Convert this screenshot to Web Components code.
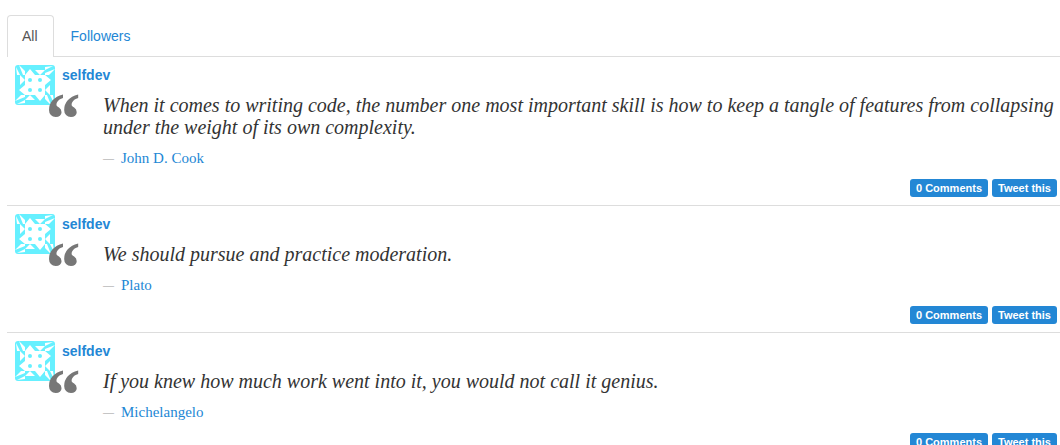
<!DOCTYPE html>
<html lang="en">
<head>
<meta charset="utf-8">
<title>Quotes</title>
<style>
  body { margin: 0; padding: 15px 0 0 7px; background: #fff; color: #333; font: 14px/20px "Liberation Sans", Arial, sans-serif; overflow-x: hidden; }
</style>
</head>
<body>
<quote-feed>
  <quote-tabs></quote-tabs>
  <quote-item user="selfdev" author="John D. Cook">When it comes to writing code, the number one most important skill is how to keep a tangle of features from collapsing under the weight of its own complexity.</quote-item>
  <quote-item user="selfdev" author="Plato">We should pursue and practice moderation.</quote-item>
  <quote-item user="selfdev" author="Michelangelo">If you knew how much work went into it, you would not call it genius.</quote-item>
</quote-feed>

<template id="feed"><style>:host { display: block; }</style><slot></slot></template>

<template id="tabs">
  <style>
    :host { display: block; }
    nav { display: flex; gap: 2px; border-bottom: 1px solid #ddd; }
    a { padding: 10px 15px 10px 14px; border: 1px solid transparent; border-bottom: 0; margin-bottom: -1px; color: #2387d5; text-decoration: none; border-radius: 4px 4px 0 0; }
    a[aria-current] { color: #555; border-color: #ddd; background: #fff; padding-bottom: 11px; }
  </style>
  <nav><a href="#all" aria-current="page">All</a><a href="#followers">Followers</a></nav>
</template>

<template id="avatar">
  <style>:host { display: block; width: 40px; height: 40px; } svg { display: block; }</style>
  <svg width="40" height="40" viewBox="0 0 40 40" aria-hidden="true">
    <defs><g id="q">
      <path fill="#66f0ff" d="M3 0H30V10H0V3Q0 0 3 0z"/>
      <path fill="#fff" d="M1 2L5 10H2zM4 0L10 6V10H8z"/>
      <path fill="#fff" d="M10 10L15 4L20 10zM20 5H30L25 10z"/>
      <circle cx="15" cy="15" r="2" fill="#66f0ff"/>
    </g></defs>
    <use href="#q"/><use href="#q" transform="rotate(90 20 20)"/><use href="#q" transform="rotate(180 20 20)"/><use href="#q" transform="rotate(270 20 20)"/>
  </svg>
</template>

<template id="item">
  <style>
    :host { display: block; border-bottom: 1px solid #ddd; }
    article { display: grid; grid-template-columns: 40px minmax(0, 1fr); column-gap: 7px; padding: 8px 0 8px 8px; }
    a { color: #2387d5; text-decoration: none; }
    .user { font-weight: bold; }
    figure { position: relative; margin: 9px 0 0 41px; font-family: "Liberation Serif", Georgia, serif; }
    figure::before { content: "\201C"; position: absolute; left: -61px; top: -12px; color: #777; font: italic bold 74px/74px "Liberation Serif", serif; }
    blockquote { margin: 0; font-size: 20px; line-height: 22px; font-style: italic; }
    figcaption { display: flex; gap: 7px; margin-top: 10px; font-size: 15px; line-height: 20px; color: #999; }
    .dash { font-size: 11px; }
    footer { display: flex; justify-content: flex-end; gap: 4px; margin: 11px 3px 0 0; }
    button { border: 0; border-radius: 3px; padding: 0 6px; background: #2387d5; color: #fff; font: bold 11px/18px "Liberation Sans", Arial, sans-serif; }
  </style>
  <article>
    <user-avatar></user-avatar>
    <div>
      <a class="user" href="#user"></a>
      <figure><blockquote><slot></slot></blockquote><figcaption><span class="dash">—</span><a class="author" href="#author"></a></figcaption></figure>
      <footer><button type="button">0 Comments</button><button type="button">Tweet this</button></footer>
    </div>
  </article>
</template>

<script>
  class TemplateElement extends HTMLElement {
    constructor() {
      super();
      this.attachShadow({ mode: "open" }).append(document.getElementById(this.constructor.template).content.cloneNode(true));
    }
  }
  customElements.define("quote-feed", class extends TemplateElement { static template = "feed"; });
  customElements.define("quote-tabs", class extends TemplateElement { static template = "tabs"; });
  customElements.define("user-avatar", class extends TemplateElement { static template = "avatar"; });
  customElements.define("quote-item", class extends TemplateElement {
    static template = "item";
    connectedCallback() {
      for (const name of ["user", "author"])
        this.shadowRoot.querySelector("." + name).textContent = this.getAttribute(name);
    }
  });
</script>
</body>
</html>
